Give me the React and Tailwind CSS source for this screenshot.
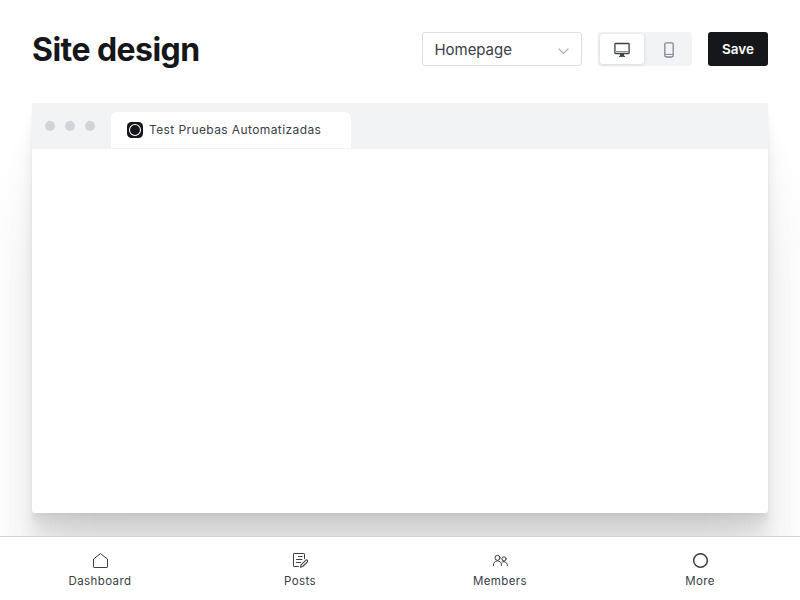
import React from "react";

function DesktopIcon() {
  return (
    <svg width="16" height="16" viewBox="0 0 16 16" fill="none" stroke="#394047">
      <rect x="0.9" y="1.5" width="14.2" height="10" rx="0.8" strokeWidth="1.3" />
      <path d="M1 9.5h14" stroke="#8a9096" />
      <path d="M6.2 12h3.6l.4 2H5.8z" fill="#394047" stroke="none" />
      <path d="M5 14.4h6" />
    </svg>
  );
}

function MobileIcon() {
  return (
    <svg width="16" height="16" viewBox="0 0 16 16" fill="none" stroke="#7c8b9a">
      <rect x="3.8" y="0.8" width="8.4" height="14.2" rx="1.4" strokeWidth="1.3" />
      <path d="M3.8 12.4h8.4" />
    </svg>
  );
}

function HomeIcon() {
  return (
    <svg width="16" height="16" viewBox="0 0 16 16" fill="none" stroke="#394047" strokeLinejoin="round">
      <path d="M1.5 6L8.5 0.6 15.5 6v7.9a.6.6 0 0 1-.6.6H2.1a.6.6 0 0 1-.6-.6z" />
    </svg>
  );
}

function PostsIcon() {
  return (
    <svg width="16" height="16" viewBox="0 0 16 16" fill="none" stroke="#394047" strokeLinecap="round" strokeLinejoin="round">
      <path d="M6.5 13.5H2.1a.6.6 0 0 1-.6-.6V1.1a.6.6 0 0 1 .6-.6h9.8a.6.6 0 0 1 .6.6v4.6" />
      <path d="M6.5 3.5h3.5M4.5 6.5H10M4.5 9.5h4" />
      <path d="M13.7 7.3a1.15 1.15 0 0 1 1.7 1.6l-4.7 4.6-2.3.8.7-2.4z" strokeWidth="1.1" />
    </svg>
  );
}

function MembersIcon() {
  return (
    <svg width="16" height="16" viewBox="0 0 16 16" fill="none" stroke="#394047" strokeLinecap="round">
      <circle cx="5.5" cy="4.8" r="2.5" />
      <path d="M1.3 12.5c0-2.9 1.7-4.6 4.2-4.6s4.1 1.7 4.1 4.6" />
      <circle cx="12" cy="5.9" r="2.1" />
      <path d="M10.2 9c2.7-1.1 5.2.6 5.2 3.5" />
    </svg>
  );
}

function MoreIcon() {
  return (
    <svg width="16" height="16" viewBox="0 0 16 16" fill="none" stroke="#394047" strokeWidth="1.5">
      <circle cx="8.5" cy="7.5" r="6.8" />
    </svg>
  );
}

const navItems = [
  { label: "Dashboard", Icon: HomeIcon },
  { label: "Posts", Icon: PostsIcon },
  { label: "Members", Icon: MembersIcon },
  { label: "More", Icon: MoreIcon },
];

export default function App() {
  return (
    <div className="flex h-[600px] w-[800px] flex-col overflow-hidden bg-white font-['Inter',sans-serif] text-[#394047]">
      <main className="min-h-0 flex-1 overflow-hidden px-8 pt-8">
        <header className="flex h-[34px] items-center">
          <h1 className="flex-1 pt-0.5 text-[32px] leading-9 font-bold tracking-[-0.55px] text-[#15171a]">Site design</h1>
          <button className="flex h-[34px] w-40 items-center justify-between rounded-[3px] border border-[#dddfe1] pt-0.5 pr-3 pl-[11.5px] text-[15px] tracking-[-0.05px]">
            Homepage
            <svg className="mt-0.5" width="11" height="7" viewBox="0 0 11 7" fill="none" stroke="#abb4be" strokeWidth="1.2" strokeLinecap="round">
              <path d="M1 1l4.5 4.5L10 1" />
            </svg>
          </button>
          <div className="ml-4 flex h-[34px] w-[94px] rounded-[3px] bg-[#f1f3f4] p-0.5">
            <button className="flex w-11 items-center justify-center rounded-[3px] bg-white pt-0.5 shadow-[0_1px_4px_rgba(0,0,0,0.12)]">
              <DesktopIcon />
            </button>
            <button className="flex flex-1 items-center justify-center pt-0.5 pl-[3px]">
              <MobileIcon />
            </button>
          </div>
          <button className="ml-4 h-[34px] w-[60px] rounded-[3px] bg-[#15171a] text-[13.5px] font-semibold text-white">
            Save
          </button>
        </header>

        <section className="mt-[37px] flex h-[410px] flex-col overflow-hidden rounded-[3px] bg-white shadow-[0_0_1px_rgba(0,0,0,0.05),0_2.8px_2.2px_rgba(0,0,0,0.02),0_6.7px_5.3px_rgba(0,0,0,0.028),0_12.5px_10px_rgba(0,0,0,0.035),0_22.3px_17.9px_rgba(0,0,0,0.042),0_41.8px_33.4px_rgba(0,0,0,0.05),0_100px_80px_rgba(0,0,0,0.07)]">
          <div className="flex h-[46px] shrink-0 border-b border-[#f1f3f4] bg-[#f1f3f4]">
            <div className="mt-[18px] ml-[13px] flex gap-2.5">
              <span className="size-2.5 rounded-full bg-[#ced4d9]" />
              <span className="size-2.5 rounded-full bg-[#ced4d9]" />
              <span className="size-2.5 rounded-full bg-[#ced4d9]" />
            </div>
            <div className="mt-[9px] ml-4 flex w-60 items-center rounded-t-[6px] bg-white pl-4 text-[12px] tracking-[0.4px]">
              <svg width="16" height="16" viewBox="0 0 16 16">
                <rect width="16" height="16" rx="4.5" fill="#15171a" />
                <circle cx="8" cy="8" r="5.5" fill="none" stroke="#fff" strokeWidth="1.1" />
              </svg>
              <span className="ml-1.5 whitespace-nowrap">Test Pruebas Automatizadas</span>
            </div>
          </div>
        </section>
      </main>

      <nav className="grid h-16 shrink-0 grid-cols-4 border-t border-[#ced4d9] bg-white">
        {navItems.map(({ label, Icon }) => (
          <a key={label} className="flex flex-col items-center pt-4 text-[11.5px] leading-4 tracking-[0.4px]">
            <Icon />
            <span className="mt-1">{label}</span>
          </a>
        ))}
      </nav>
    </div>
  );
}
